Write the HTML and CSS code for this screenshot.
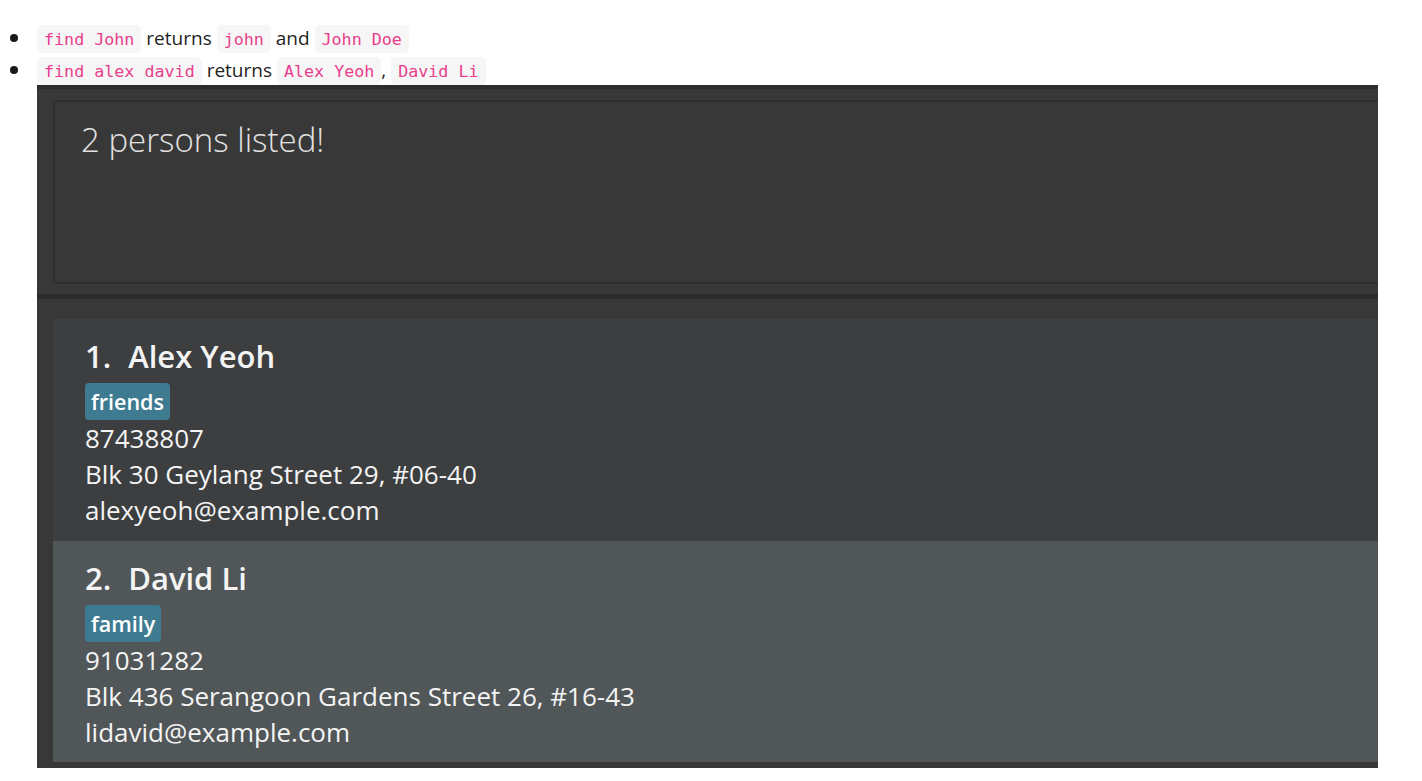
FILE: index.html
```html
<!DOCTYPE html>
<html>
<head>
<meta charset="utf-8">
<link rel="stylesheet" href="styles.css">
</head>
<body>
<ul class="examples">
  <li><code>find John</code> returns <code>john</code> and <code>John Doe</code></li>
  <li><code>find alex david</code> returns <code>Alex Yeoh</code>, <code>David Li</code>
    <div class="shot">
      <div class="menubar"></div>
      <div class="result-pane">
        <div class="result-box">2 persons listed!</div>
      </div>
      <div class="separator"></div>
      <div class="list-pane">
        <div class="card card-odd">
          <div class="name"><span class="index">1.</span>Alex Yeoh</div>
          <div class="tags"><span class="tag">friends</span></div>
          <div class="field">87438807</div>
          <div class="field">Blk 30 Geylang Street 29, #06-40</div>
          <div class="field">alexyeoh@example.com</div>
        </div>
        <div class="card card-even">
          <div class="name"><span class="index">2.</span>David Li</div>
          <div class="tags"><span class="tag">family</span></div>
          <div class="field">91031282</div>
          <div class="field">Blk 436 Serangoon Gardens Street 26, #16-43</div>
          <div class="field">lidavid@example.com</div>
        </div>
      </div>
    </div>
  </li>
</ul>
</body>
</html>
```

FILE: styles.css
```css
html, body {
  margin: 0;
  padding: 0;
  background: #ffffff;
}
body {
  font-family: "Open Sans", "Noto Sans", sans-serif;
  color: #1f1f1f;
  overflow: hidden;
}
.examples {
  margin: 0;
  padding: 23px 0 0 37px;
  font-size: 19px;
  line-height: 31px;
}
.examples li {
  list-style: none;
}
.examples li::before {
  content: "";
  display: inline-block;
  width: 8px;
  height: 8px;
  border-radius: 50%;
  background: #1a1a1a;
  margin-left: -27px;
  margin-right: 19px;
  vertical-align: 3px;
}
code {
  font-family: "DejaVu Sans Mono", monospace;
  font-size: 16.7px;
  color: #e83e8c;
  background: #f6f6f6;
  border-radius: 5px;
  padding: 4px 7px;
}
.shot {
  width: 1341px;
  height: 683px;
  background: #383838;
  overflow: hidden;
  margin-top: -2px;
  font-family: "Open Sans", "Noto Sans", sans-serif;
}
.menubar {
  height: 4px;
  background: #2c2c2c;
}
.result-pane {
  padding: 11px 0 10px 16px;
}
.result-box {
  border: 2px solid #2e2e2e;
  border-right: none;
  background: #383838;
  color: #e2e2e2;
  font-size: 33px;
  font-weight: 300;
  padding: 16px 0 0 26px;
  box-sizing: border-box;
  height: 184px;
  line-height: 44px;
}
.separator {
  height: 5px;
  background: #2b2b2b;
}
.list-pane {
  padding: 20px 0 0 16px;
}
.card {
  padding: 17px 0 11px 32px;
  color: #f4f4f4;
  height: 221px;
  box-sizing: border-box;
}
.card-odd {
  background: #3c3e40;
  height: 222px;
}
.card-even {
  background: #515658;
}
.name {
  font-size: 31px;
  font-weight: 600;
  line-height: 40px;
}
.index {
  margin-right: 17px;
}
.tags {
  display: flex;
  margin-top: 7px;
  margin-bottom: 0;
}
.tag {
  background: #3e7b91;
  color: #ffffff;
  font-size: 21.5px;
  font-weight: 600;
  line-height: 37px;
  padding: 0 6px;
  border-radius: 4px;
}
.field {
  font-size: 26px;
  line-height: 36px;
}
```
